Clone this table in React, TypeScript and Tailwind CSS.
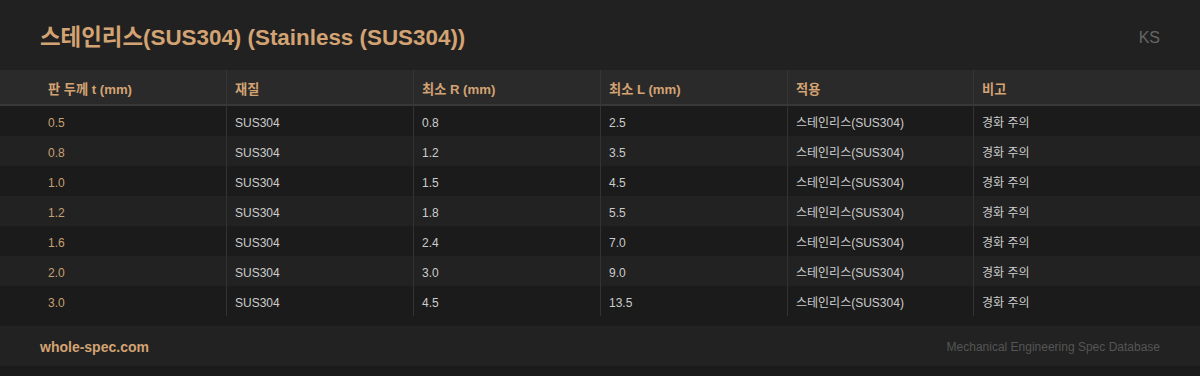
import React from "react";

const rows = [
  ["0.5", "0.8", "2.5"],
  ["0.8", "1.2", "3.5"],
  ["1.0", "1.5", "4.5"],
  ["1.2", "1.8", "5.5"],
  ["1.6", "2.4", "7.0"],
  ["2.0", "3.0", "9.0"],
  ["3.0", "4.5", "13.5"],
];

const headers = ["판 두께 t (mm)", "재질", "최소 R (mm)", "최소 L (mm)", "적용", "비고"];

const grid = "grid grid-cols-[226px_187px_187px_187px_186px_227px]";

export default function App() {
  return (
    <div
      className="w-[1200px] h-[376px] bg-[#1b1b1b] overflow-hidden"
      style={{ fontFamily: '"Liberation Sans", Arial, "Noto Sans CJK KR", sans-serif' }}
    >
      {/* Title bar */}
      <div className="h-[70px] bg-[#212121] flex items-center justify-between px-10 pt-[6px]">
        <h1 className="text-[22.4px] font-bold text-[#d4a373]">
          스테인리스(SUS304) (Stainless (SUS304))
        </h1>
        <span className="text-base text-[#666666]">KS</span>
      </div>

      {/* Table */}
      <div>
        <div className={`${grid} h-[36px] bg-[#2a2a2a] border-b-2 border-[#383838]`}>
          {headers.map((h, i) => (
            <div
              key={h}
              className={`flex items-center pt-[5px] text-[13.2px] font-bold text-[#d4a373] ${
                i === 0 ? "pl-12" : "pl-2 border-l border-[#353535]"
              }`}
            >
              {h}
            </div>
          ))}
        </div>
        {rows.map((r, idx) => (
          <div
            key={r[0]}
            className={`${grid} h-[30px] text-[12px] ${idx % 2 === 0 ? "bg-[#1b1b1b]" : "bg-[#222222]"}`}
          >
            <div className="flex items-center pt-[4px] pl-12 text-[#c9a073]">{r[0]}</div>
            <div className="flex items-center pt-[4px] pl-2 border-l border-[#333333] text-[#cccccc]">SUS304</div>
            <div className="flex items-center pt-[4px] pl-2 border-l border-[#333333] text-[#cccccc]">{r[1]}</div>
            <div className="flex items-center pt-[4px] pl-2 border-l border-[#333333] text-[#cccccc]">{r[2]}</div>
            <div className="flex items-center pt-[4px] pl-2 border-l border-[#333333] text-[#cccccc]">스테인리스(SUS304)</div>
            <div className="flex items-center pt-[4px] pl-2 border-l border-[#333333] text-[#cccccc]">경화 주의</div>
          </div>
        ))}
      </div>

      {/* Footer */}
      <div className="mt-[10px] h-[40px] bg-[#222222] flex items-center justify-between px-10 pt-[2px]">
        <span className="text-[14px] font-bold text-[#d4a373]">whole-spec.com</span>
        <span className="text-[12px] text-[#555555]">Mechanical Engineering Spec Database</span>
      </div>
    </div>
  );
}
